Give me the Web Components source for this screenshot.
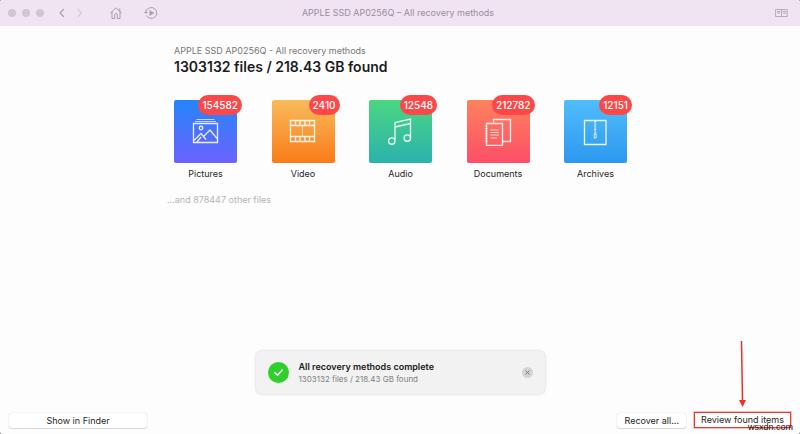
<!DOCTYPE html>
<html lang="en">
<head>
<meta charset="utf-8">
<title>APPLE SSD AP0256Q – All recovery methods</title>
<style>
html{background:#55505a}
body{margin:0;font-family:Inter,"Liberation Sans",sans-serif;color:#262626}
</style>
</head>
<body>
<recovery-app></recovery-app>
<script>
const define=(name,html,setup)=>customElements.define(name,class extends HTMLElement{
  connectedCallback(){
    if(this.shadowRoot)return;
    this.attachShadow({mode:'open'}).innerHTML=html;
    if(setup)setup(this);
  }
});

define('title-bar',`
<style>
:host{display:grid;grid-template-columns:1fr auto 1fr;align-items:center;height:26px;padding:0 12px 0 8px;background:#f1e4f2;color:#a99dab;box-sizing:border-box}
nav{display:flex;align-items:center}
.lights{display:flex;gap:6px;margin-right:14px}
.lights i{width:8px;height:8px;border-radius:50%;background:#d3c6d4}
button{all:unset;display:flex;color:#a99dab}
svg{display:block;fill:none;stroke:currentColor;stroke-linecap:round;stroke-linejoin:round}
.next{margin-left:8px;color:#d6cad8}
.home{margin-left:25px}
.scan{margin-left:21px}
.book{justify-self:end}
h1{margin:0;font-size:9px;line-height:12px;font-weight:400;color:#998d9b}
</style>
<nav>
<span class="lights"><i></i><i></i><i></i></span>
<button class="back" aria-label="Back"><svg width="8" height="10" viewBox="0 0 8 10" stroke-width="1.2"><path d="M5.5 1.5 2 5l3.500 3.500"/></svg></button>
<button class="next" aria-label="Forward"><svg width="10" height="10" viewBox="0 0 10 10" stroke-width="1.200"><path d="M4 1.500 7.500 5 4 8.500"/></svg></button>
<button class="home" aria-label="Home"><svg width="14" height="14" viewBox="0 0 14 14"><path d="M1.500 7 7 1.800 12.500 7M3 6v6.500h2.700V8.700q0-1.200 1.300-1.200t1.300 1.200v3.800H11V6M10.800 5V2.800"/></svg></button>
<button class="scan" aria-label="Resume scan"><svg width="14" height="14" viewBox="0 0 14 14"><path d="M2.600 4A5.500 5.500 0 1 1 2.500 9.800M.7 6.500h2.500M2 4v3.500"/><path d="M5.500 4v6L10.200 7z" fill="currentColor" stroke="none"/></svg></button>
</nav>
<h1>APPLE SSD AP0256Q – All recovery methods</h1>
<button class="book" aria-label="Show preview"><svg width="13" height="10" viewBox="0 0 13 10" stroke-width=".8"><path d="M.8 1.500h11.400v7H.8zM6.500 1.500v7M2.300 3.500h2.500M2.300 5h2.500M8.200 3.500h2.500M8.200 5h2.500"/></svg></button>`);

const icons={
pictures:'<path d="M4.500 1.500h18M3 3.500h21" stroke-width=".8"/><path d="M1.500 5.500h24v19h-24zM2 22.500l7-7 5 6M11 19l7-7 7 8.500M5 24l4-5"/><circle cx="9" cy="10" r="1.800"/>',
video:'<path d="M1.500 2.500h24v21h-24zM1.500 7.500h24M1.500 18.500h24M6.500 2.500v5M11 2.500v5M16 2.500v5M20.500 2.500v5M6.500 18.500v5M11 18.500v5M16 18.500v5M20.500 18.500v5"/><path d="M13.500 7.500v11" stroke-width=".7"/>',
audio:'<path d="M8 22V4.500L23.500 1v19M8 9l15.500-3.500"/><circle cx="4.800" cy="23" r="3.200"/><circle cx="20.300" cy="20" r="3.200"/>',
documents:'<path d="M9.500 4.500v-3h17v22h-8M2.500 5.500h16v22h-16z"/><path d="M1 8h2.500M1 10.500h2.500M1 13h2.500M1 15.500h2.500M1 18h2.500M1 20.500h2.500M1 23h2.500M6.500 12h8.500M6.500 14.500h8.500M6.500 17h8.500M6.500 20h6.500" stroke-width=".8"/>',
archives:'<path d="M2.500 2.500h21.500v24H2.500z"/><path d="M13.200 3v13" stroke-width="2" stroke-dasharray="1 .6"/><path d="M12.200 16h2v4h-2z" stroke-width=".9"/>'
};
define('category-tile',`
<style>
:host{display:block;width:63px}
a{display:block;color:inherit;text-decoration:none;text-align:center}
.box{position:relative;display:grid;place-items:center;height:63px;border-radius:2px;background:linear-gradient(var(--from),var(--to))}
svg{width:28px;height:28px;fill:none;stroke:#fff;stroke-opacity:.88;stroke-width:1.350}
.count{position:absolute;top:-5px;right:-5px;padding:0 4px;border-radius:10px;background:#fc4848;color:#fff;font-size:10px;line-height:20px;font-weight:500}
.label{display:flex;justify-content:center;margin-top:5px;font-size:9px;line-height:12px}
</style>
<a href="#"><span class="box"><svg viewBox="0 0 28 28"></svg><span class="count"></span></span><span class="label"><slot></slot></span></a>`,
el=>{
  const r=el.shadowRoot;
  r.querySelector('svg').innerHTML=icons[el.getAttribute('icon')];
  r.querySelector('.count').textContent=el.getAttribute('count');
});

define('status-toast',`
<style>
:host{display:flex;align-items:center;box-sizing:border-box;width:36%;min-width:289px;height:43px;padding:0 12px;border-radius:6px;background:#f2f2f2;box-shadow:0 0 3px #0003}
.check{width:21px;height:21px;flex:none}
.text{flex:1;margin-left:10px}
strong,span{display:block;font-size:9px;line-height:13px}
strong{color:#202020;font-weight:600}
span{font-size:8px;color:#808080}
button{all:unset;display:flex}
</style>
<svg class="check" viewBox="0 0 21 21"><circle cx="10.500" cy="10.500" r="10.500" fill="#2fd02b"/><path d="M6.800 10.800 9.500 13.300 14.200 8" fill="none" stroke="#fff" stroke-width="1.500" stroke-linecap="round" stroke-linejoin="round"/></svg>
<div class="text"><strong><slot></slot></strong><span><slot name="detail"></slot></span></div>
<button aria-label="Dismiss"><svg width="11" height="11" viewBox="0 0 11 11"><circle cx="5.500" cy="5.500" r="5.500" fill="#d4d4d4"/><path d="M3.500 3.500l4 4M7.500 3.500l-4 4" stroke="#777"/></svg></button>`);

define('push-button',`
<style>
:host{display:block}
button{display:block;box-sizing:border-box;width:100%;height:15px;padding:0 7px;border:0;border-radius:3px;background:#fff;box-shadow:0 0 1px #0004,0 1px 1px #0002;font:9px/15px Inter,"Liberation Sans",sans-serif;color:#262626;white-space:nowrap}
:host([marked]) button{height:16px;padding:0 6px;border:1px solid #ee3a2c;border-radius:0;outline:1px solid #ee3a2c55;box-shadow:none;line-height:14px}
</style>
<button><slot></slot></button>`);

define('callout-arrow',`
<style>
:host{position:absolute;bottom:100%;left:50%;margin:0 0 4px -5px;pointer-events:none}
svg{display:block}
</style>
<svg width="10" height="68" viewBox="0 0 10 68"><path d="M4.500 1 5.500 61" stroke="#ed3024" stroke-width="1.500"/><path d="M2 60h7L5.600 67z" fill="#ed3024"/></svg>`);

define('recovery-app',`
<style>
:host{display:flex;flex-direction:column;min-height:100vh;background:#fdfdfd;border-radius:2px;overflow:hidden;position:relative}
main{flex:1;width:453px;margin:0 auto;padding:19px 0 0 1px}
.sub{margin:0;font-size:9px;line-height:12px;color:#777}
h2{margin:0;font-size:14px;line-height:19px;font-weight:600;color:#1c1c1c}
.tiles{display:flex;justify-content:space-between;margin-top:24px}
.other{margin:14px 0 0 -7px;font-size:9px;line-height:12px;color:#b4b4b4}
status-toast{align-self:center}
footer{display:flex;align-items:center;padding:18px 9px 6px}
.show{width:138px;margin-right:auto}
.review{position:relative;margin-left:8px}
.mark{position:absolute;right:7px;bottom:1px;font:9px/11px "Liberation Sans",sans-serif;color:#111}
</style>
<title-bar></title-bar>
<main>
<p class="sub">APPLE SSD AP0256Q - All recovery methods</p>
<h2>1303132 files / 218.43 GB found</h2>
<div class="tiles">
<category-tile icon="pictures" count="154582" style="--from:#2585fb;--to:#6c62fd">Pictures</category-tile>
<category-tile icon="video" count="2410" style="--from:#f9bb5b;--to:#f97b19">Video</category-tile>
<category-tile icon="audio" count="12548" style="--from:#4bd681;--to:#2bb2ad">Audio</category-tile>
<category-tile icon="documents" count="212782" style="--from:#fe825c;--to:#fd4e68">Documents</category-tile>
<category-tile icon="archives" count="12151" style="--from:#50bdfb;--to:#2d98f0">Archives</category-tile>
</div>
<p class="other">...and 878447 other files</p>
</main>
<status-toast>All recovery methods complete<span slot="detail">1303132 files / 218.43 GB found</span></status-toast>
<footer>
<push-button class="show">Show in Finder</push-button>
<push-button>Recover all...</push-button>
<div class="review"><callout-arrow></callout-arrow><push-button marked>Review found items</push-button></div>
</footer>
<span class="mark">wsxdn.com</span>`);
</script>
</body>
</html>
